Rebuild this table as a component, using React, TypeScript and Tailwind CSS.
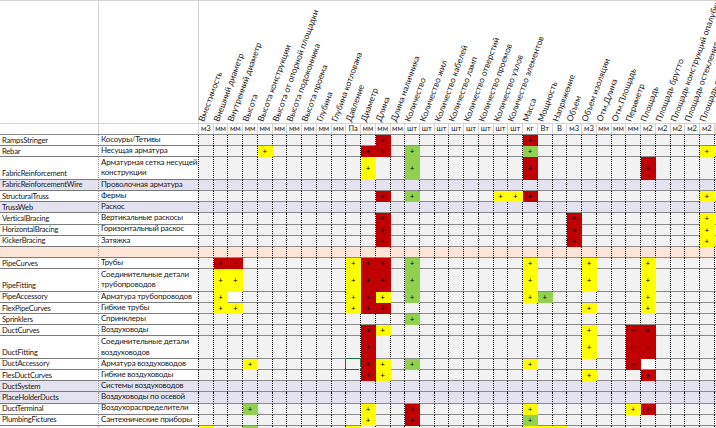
import React from "react";

type Fill = "r" | "y" | "g" | "w" | "s";
interface Row {
  a: string;
  b: string[];
  h: 1 | 2 | 0;
  bg?: "lav" | "peach";
  c: Record<number, Fill>;
}

const COLS: [string, string][] = [
  ["Вместимость", "м3"],
  ["Внешний диаметр", "мм"],
  ["Внутренний диаметр", "мм"],
  ["Высота", "мм"],
  ["Высота конструкции", "мм"],
  ["Высота от опорной площадки", "мм"],
  ["Высота подоконника", "мм"],
  ["Высота проема", "мм"],
  ["Глубина", "мм"],
  ["Глубина котлована", "мм"],
  ["Давление", "Па"],
  ["Диаметр", "мм"],
  ["Длина", "мм"],
  ["Длина наличника", "мм"],
  ["Количество", "шт"],
  ["Количество жил", "шт"],
  ["Количество кабелей", "шт"],
  ["Количество ламп", "шт"],
  ["Количество отверстий", "шт"],
  ["Количество проемов", "шт"],
  ["Количество узлов", "шт"],
  ["Количество элементов", "шт"],
  ["Масса", "кг"],
  ["Мощность", "Вт"],
  ["Напряжение", "В"],
  ["Объем", "м3"],
  ["Объем изоляции", "м3"],
  ["Отм.Длина", "мм"],
  ["Отм.Площадь", "мм"],
  ["Периметр", "мм"],
  ["Площадь", "м2"],
  ["Площадь брутто", "м2"],
  ["Площадь конструкций опалубки", "м2"],
  ["Площадь остекления", "м2"],
  ["Площадь стен", "м2"],
];

const ROWS: Row[] = [
  { a: "RampsStringer", b: ["Косоуры/Тетивы"], h: 1, c: { 12: "r", 22: "r" } },
  { a: "Rebar", b: ["Несущая арматура"], h: 1, c: { 4: "y", 11: "r", 12: "r", 14: "g", 22: "g", 34: "y" } },
  { a: "FabricReinforcement", b: ["Арматурная сетка несущей", "конструкции"], h: 2, c: { 11: "y", 14: "g", 22: "r", 30: "r" } },
  { a: "FabricReinforcementWire", b: ["Проволочная арматура"], h: 1, bg: "lav", c: {} },
  { a: "StructuralTruss", b: ["Фермы"], h: 1, c: { 12: "r", 14: "g", 20: "y", 21: "y", 22: "r", 34: "y" } },
  { a: "TrussWeb", b: ["Раскос"], h: 1, bg: "lav", c: {} },
  { a: "VerticalBracing", b: ["Вертикальные раскосы"], h: 1, c: { 12: "r", 25: "r", 34: "y" } },
  { a: "HorizontalBracing", b: ["Горизонтальный раскос"], h: 1, c: { 12: "r", 25: "r", 34: "y" } },
  { a: "KickerBracing", b: ["Затяжка"], h: 1, c: { 12: "r", 25: "r", 34: "y" } },
  { a: "", b: [""], h: 1, bg: "peach", c: {} },
  { a: "PipeCurves", b: ["Трубы"], h: 1, c: { 1: "r", 2: "r", 10: "y", 11: "r", 12: "r", 14: "g", 22: "y", 26: "y", 30: "y" } },
  { a: "PipeFitting", b: ["Соединительные детали", "трубопроводов"], h: 2, c: { 1: "y", 2: "y", 10: "y", 11: "r", 12: "r", 14: "g", 22: "y", 26: "y", 30: "y" } },
  { a: "PipeAccessory", b: ["Арматура трубопроводов"], h: 1, c: { 1: "y", 2: "w", 10: "y", 11: "r", 12: "y", 14: "g", 22: "y", 23: "g", 30: "y" } },
  { a: "FlexPipeCurves", b: ["Гибкие трубы"], h: 1, c: { 1: "y", 2: "y", 10: "y", 11: "r", 12: "r", 26: "y", 30: "y" } },
  { a: "Sprinklers", b: ["Спринклеры"], h: 1, c: { 14: "g" } },
  { a: "DuctCurves", b: ["Воздуховоды"], h: 1, c: { 11: "r", 12: "y", 26: "y", 29: "r", 30: "r" } },
  { a: "DuctFitting", b: ["Соединительные детали", "воздуховодов"], h: 2, c: { 11: "r", 26: "y", 29: "r", 30: "r" } },
  { a: "DuctAccessory", b: ["Арматура воздуховодов"], h: 1, c: { 3: "y", 10: "s", 11: "r", 12: "y", 14: "g", 22: "y", 29: "r", 30: "w" } },
  { a: "FlesDuctCurves", b: ["Гибкие воздуховоды"], h: 1, c: { 11: "r", 12: "y", 26: "y", 30: "r" } },
  { a: "DuctSystem", b: ["Системы воздуховодов"], h: 1, bg: "lav", c: {} },
  { a: "PlaceHolderDucts", b: ["Воздуховоды по осевой"], h: 1, bg: "lav", c: {} },
  { a: "DuctTerminal", b: ["Воздухораспределители"], h: 1, c: { 3: "g", 11: "y", 14: "r", 22: "y", 29: "y", 30: "r" } },
  { a: "PlumbingFictures", b: ["Сантехнические приборы"], h: 1, c: { 11: "y", 14: "r", 22: "g" } },
  { a: "", b: [""], h: 1, c: { 0: "y", 3: "g", 10: "y", 22: "y", 23: "y", 24: "y" } },
];

const FONT = { fontFamily: "Lato, 'Noto Sans', 'Liberation Sans', sans-serif" };

function fillClass(f: Fill | undefined, rowBg?: "lav" | "peach"): string {
  switch (f) {
    case "r":
      return "bg-[#c00000] border-r-[#c00000] border-b-[#c00000]";
    case "y":
      return "bg-[#ffff00] border-r-[#ffff00] border-b-[#ffff00]";
    case "g":
      return "bg-[#92d050] border-r-[#92d050] border-b-[#92d050]";
    case "w":
      return "bg-white border-r-black border-b-[#8a8a8a]";
    default:
      if (rowBg === "lav") return "bg-[#e4e2ef] border-r-black border-b-[#8a8a8a]";
      if (rowBg === "peach") return "bg-[#fce4d6] border-r-black border-b-[#8a8a8a]";
      return "bg-[#f2f2f2] border-r-black border-b-[#8a8a8a]";
  }
}

function leftBg(bg?: "lav" | "peach"): string {
  if (bg === "lav") return "bg-[#e4e2ef]";
  if (bg === "peach") return "bg-[#fce4d6]";
  return "bg-white";
}

function DataRow({ row }: { row: Row }) {
  const h = row.h === 2 ? "h-[22.4px]" : "h-[11.2px]";
  return (
    <div className={`flex ${h} shrink-0`}>
      <div
        className={`w-[99px] shrink-0 flex items-end pl-[2px] pb-[0.5px] border-r border-b border-dotted [border-bottom-style:solid] border-r-[#9a9a9a] border-b-[#7a7a7a] text-[7.6px] tracking-[-0.2px] leading-[10px] text-[#1a1a1a] whitespace-nowrap overflow-hidden ${leftBg(row.bg)}`}
      >
        {row.a}
      </div>
      <div
        className={`w-[100px] shrink-0 flex flex-col justify-end pl-[2px] pb-[0.5px] border-r border-b border-dotted [border-bottom-style:solid] border-r-black border-b-[#7a7a7a] text-[8px] tracking-[-0.2px] leading-[10.8px] text-[#1a1a1a] whitespace-nowrap overflow-hidden ${leftBg(row.bg)}`}
      >
        {row.b.map((t, i) => (
          <span key={i}>{t}</span>
        ))}
      </div>
      {COLS.map((_, i) => {
        const f = row.c[i];
        const colored = f === "r" || f === "y" || f === "g";
        return (
          <div
            key={i}
            className={`relative w-[14.74px] shrink-0 flex items-center justify-center border-r border-b border-dotted [border-bottom-style:solid] ${fillClass(f, row.bg)}`}
          >
            {colored && (
              <span className="text-[8px] leading-none text-black" style={FONT}>
                +
              </span>
            )}
            {f === "s" && (
              <>
                <span className="absolute -left-[1px] -top-[1px] -right-[1px] -bottom-[1px] border-[1.5px] border-[#1f6b3f]" />
                <span className="absolute -right-[2.5px] -bottom-[2.5px] w-[4px] h-[4px] bg-[#1f6b3f] border border-white" />
              </>
            )}
          </div>
        );
      })}
      <div className={`flex-1 border-b border-b-[#8a8a8a] ${row.bg === "lav" ? "bg-[#e4e2ef]" : "bg-[#f2f2f2]"}`} />
    </div>
  );
}

export default function App() {
  return (
    <div className="w-[716px] h-[428px] overflow-hidden bg-white flex flex-col" style={FONT}>
      {/* header */}
      <div className="flex h-[124px] shrink-0 border-t border-t-[#d4d4d4] border-b border-b-[#d4d4d4]">
        <div className="w-[99px] shrink-0 border-r border-r-[#d4d4d4]" />
        <div className="w-[100px] shrink-0 border-r border-r-[#d4d4d4]" />
        {COLS.map(([name], i) => (
          <div key={i} className="relative w-[14.74px] shrink-0">
            <span className="absolute left-[7px] bottom-[0px] origin-bottom-left rotate-[-70deg] whitespace-nowrap text-[8.5px] leading-[9px] text-[#222]">
              {name}
            </span>
          </div>
        ))}
        <div className="flex-1" />
      </div>
      {/* units */}
      <div className="flex h-[11px] shrink-0 border-b border-b-[#8a8a8a]">
        <div className="w-[99px] shrink-0 border-r border-r-[#d4d4d4]" />
        <div className="w-[100px] shrink-0 border-r border-r-[#d4d4d4]" />
        {COLS.map(([, u], i) => (
          <div
            key={i}
            className="w-[14.74px] shrink-0 flex items-center justify-center border-r border-r-[#d4d4d4] text-[7.6px] leading-none text-[#1a1a1a]"
          >
            {u}
          </div>
        ))}
        <div className="flex-1 bg-[#ffff00]" />
      </div>
      {ROWS.map((r, i) => (
        <DataRow key={i} row={r} />
      ))}
    </div>
  );
}
